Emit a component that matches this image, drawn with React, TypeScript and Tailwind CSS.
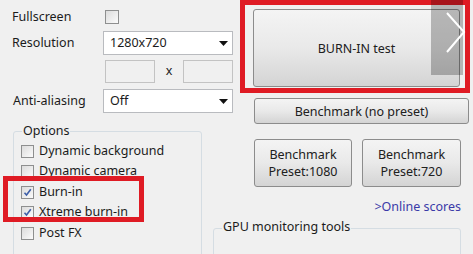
import React from "react";

const font = { fontFamily: '"Noto Sans", "Open Sans", sans-serif' };

const Check = ({ checked = false, size = 13 }: { checked?: boolean; size?: number }) => (
  <div
    className="border border-[#8e8f8f] bg-gradient-to-br from-[#dcdcdc] to-[#fbfbfb] flex items-center justify-center shrink-0"
    style={{ width: size, height: size }}
  >
    {checked && (
      <svg width="9" height="9" viewBox="0 0 9 9">
        <path d="M1.5 4.8 L3.5 7 L7.8 1.2" fill="none" stroke="#3d5ea8" strokeWidth="1.6" />
      </svg>
    )}
  </div>
);

const Select = ({ value }: { value: string }) => (
  <div className="w-[130px] h-[24px] bg-white border border-[#b9bbbf] flex items-center justify-between pl-[6px] pr-[4px]">
    <span>{value}</span>
    <svg width="9" height="5" viewBox="0 0 9 5">
      <path d="M0 0 H9 L4.5 5 Z" fill="#111" />
    </svg>
  </div>
);

const Button = ({ className, children }: { className: string; children: React.ReactNode }) => (
  <div
    className={
      "shrink-0 rounded-[3px] border border-[#8c8c8c] bg-gradient-to-b from-[#f4f4f4] via-[#e9e9e9] to-[#d4d4d4] flex items-center justify-center text-center text-[#202020] leading-[17px] " +
      className
    }
  >
    {children}
  </div>
);

const options = [
  { label: "Dynamic background", checked: false },
  { label: "Dynamic camera", checked: false },
  { label: "Burn-in", checked: true },
  { label: "Xtreme burn-in", checked: true },
  { label: "Post FX", checked: false },
];

export default function App() {
  return (
    <div
      className="relative w-[473px] h-[254px] bg-[#f0f0f0] overflow-hidden flex text-[12.5px] text-[#1b1b1b]"
      style={font}
    >
      {/* left column */}
      <div className="w-[240px] flex flex-col shrink-0">
        <div className="flex items-center h-[14px] mt-[10px] shrink-0">
          <span className="w-[105px] pl-[12px]">Fullscreen</span>
          <Check size={14} />
        </div>
        <div className="flex items-center mt-[7px] shrink-0">
          <span className="w-[103px] pl-[12px]">Resolution</span>
          <Select value="1280x720" />
        </div>
        <div className="flex items-center mt-[5px] pl-[105px] shrink-0">
          <div className="w-[50px] h-[23px] border border-[#c3c3c3] bg-[#f0f0f0]" />
          <span className="w-[28px] text-center">x</span>
          <div className="w-[50px] h-[23px] border border-[#c3c3c3] bg-[#f0f0f0]" />
        </div>
        <div className="flex items-center mt-[6px] shrink-0">
          <span className="w-[103px] pl-[13px]">Anti-aliasing</span>
          <Select value="Off" />
        </div>
        <div className="relative shrink-0 ml-[13px] mt-[18px] w-[189px] h-[130px] border border-[#d5dde3] rounded-[3px] pt-[9px] pl-[7px]">
          <span className="absolute left-[8px] top-[-8px] px-[1px] bg-[#f0f0f0] leading-[14px]">Options</span>
          {options.map((o) => (
            <div key={o.label} className="flex items-center h-[20.5px] gap-[5px]">
              <Check checked={o.checked} />
              <span>{o.label}</span>
            </div>
          ))}
        </div>
      </div>

      {/* right column */}
      <div className="flex flex-col">
        <div className="shrink-0 w-[230px] h-[93px] border-[5px] border-[#df1b24] pt-[4px] pl-[8px]">
          <Button className="w-[207px] h-[78px]">BURN-IN test</Button>
        </div>
        <Button className="ml-[14px] mt-[5px] w-[215px] h-[26px]">Benchmark (no preset)</Button>
        <div className="shrink-0 flex gap-[10px] ml-[14px] mt-[15px]">
          <Button className="w-[98px] h-[48px] flex-col">
            <span>Benchmark</span>
            <span>Preset:1080</span>
          </Button>
          <Button className="w-[99px] h-[48px] flex-col">
            <span>Benchmark</span>
            <span>Preset:720</span>
          </Button>
        </div>
        <div className="shrink-0 w-[221px] text-right text-[#3a3aa8] mt-[13px] leading-[14px]">&gt;Online scores</div>
        <div className="relative shrink-0 ml-[-27px] mt-[14px] w-[248px] h-[40px] border border-[#d5dde3] rounded-[3px]">
          <span className="absolute left-[8px] top-[-9px] px-[1px] bg-[#f0f0f0] leading-[14px]">
            GPU monitoring tools
          </span>
        </div>
      </div>

      {/* annotation overlays */}
      <div className="absolute left-[3px] top-[176px] w-[141px] h-[46px] border-[5px] border-[#df1b24]" />
      <div className="absolute left-[431px] top-0 w-[32px] h-[75px] bg-black/25">
        <svg className="absolute left-0 top-0 overflow-visible" width="32" height="75">
          <polyline points="16,13 33,32 16,52" fill="none" stroke="#fff" strokeWidth="2" />
        </svg>
      </div>
    </div>
  );
}
